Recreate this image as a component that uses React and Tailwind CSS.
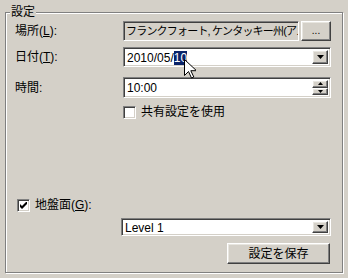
import React from 'react'

const font = { fontFamily: '"Liberation Sans", "Noto Sans CJK JP", sans-serif' }

const sunken =
  'border border-t-[#808080] border-l-[#808080] border-r-white border-b-white shadow-[inset_1px_1px_0_#404040,inset_-1px_-1px_0_#d4d0c8]'
const raised =
  'border border-t-white border-l-white border-r-[#404040] border-b-[#404040] shadow-[inset_-1px_-1px_0_#808080,inset_1px_1px_0_#e8e6e0] bg-[#d4d0c8]'

function DownArrow() {
  return (
    <svg width="7" height="4" viewBox="0 0 7 4">
      <path d="M0 0h7L3.5 4z" fill="#000" />
    </svg>
  )
}

function DropButton() {
  return (
    <div className={`${raised} w-[16px] h-full flex items-center justify-center`}>
      <DownArrow />
    </div>
  )
}

function Label({ text, mnemonic }) {
  return (
    <div className="w-[108px] shrink-0 text-[12px] text-black">
      {text}
      {mnemonic && (
        <>
          (<span className="underline">{mnemonic}</span>)
        </>
      )}
      :
    </div>
  )
}

function Check({ checked }) {
  return (
    <div className={`${sunken} w-[13px] h-[13px] bg-white flex items-center justify-center`}>
      {checked && (
        <svg width="7" height="7" viewBox="0 0 7 7">
          <path d="M0 2v3l2 2L7 2V-1L2 4z" fill="#000" />
        </svg>
      )}
    </div>
  )
}

export default function App() {
  return (
    <div className="w-[348px] h-[278px] bg-[#d4d0c8] pt-[12px] pl-[5px] relative" style={font}>
      <div className="relative w-[338px] h-[261px] border border-[#808080] shadow-[inset_1px_1px_0_#fff,1px_1px_0_#fff] pl-[9px] pr-[11px] pt-[8px]">
        <div className="absolute -top-[9px] left-[4px] px-[1px] bg-[#d4d0c8] text-[12px] leading-[16px] text-black">
          設定
        </div>

        {/* 場所 */}
        <div className="flex items-center h-[20px]">
          <Label text="場所" mnemonic="L" />
          <div className={`${sunken} w-[176px] h-[20px] bg-[#d4d0c8] overflow-hidden whitespace-nowrap text-[11px] leading-[18px] pl-[2px] tracking-[-0.8px]`}>
            フランクフォート, ケンタッキー州(アメリカ
          </div>
          <div className={`${raised} ml-[2px] w-[30px] h-[20px] flex items-center justify-center text-[10px] leading-none`}>
            ...
          </div>
        </div>

        {/* 日付 */}
        <div className="flex items-center h-[20px] mt-[6px]">
          <Label text="日付" mnemonic="T" />
          <div className={`${sunken} w-[208px] h-[20px] bg-white flex items-stretch p-[2px]`}>
            <div className="flex-1 text-[12px] leading-[16px] pl-[1px]">
              2010/05/<span className="bg-[#0a246a] text-white">10</span>
            </div>
            <DropButton />
          </div>
        </div>

        {/* 時間 */}
        <div className="flex items-center h-[21px] mt-[10px]">
          <Label text="時間" />
          <div className={`${sunken} w-[208px] h-[21px] bg-white flex items-stretch p-[2px]`}>
            <div className="flex-1 text-[12px] leading-[17px] pl-[1px]">10:00</div>
            <div className="w-[16px] flex flex-col">
              <div className={`${raised} flex-1 flex items-center justify-center`}>
                <svg width="5" height="3" viewBox="0 0 5 3">
                  <path d="M0 3h5L2.5 0z" fill="#000" />
                </svg>
              </div>
              <div className={`${raised} flex-1 flex items-center justify-center`}>
                <svg width="5" height="3" viewBox="0 0 5 3">
                  <path d="M0 0h5L2.5 3z" fill="#000" />
                </svg>
              </div>
            </div>
          </div>
        </div>

        {/* 共有設定 */}
        <div className="flex items-center mt-[7px] pl-[108px] h-[14px]">
          <Check />
          <span className="ml-[5px] text-[12px] leading-[14px]">共有設定を使用</span>
        </div>

        {/* 地盤面 */}
        <div className="flex items-center mt-[79px] pl-[2px] h-[14px]">
          <Check checked />
          <span className="ml-[5px] text-[12px] leading-[14px]">
            地盤面(<span className="underline">G</span>):
          </span>
        </div>

        <div className="flex mt-[6px] pl-[106px]">
          <div className={`${sunken} w-[210px] h-[18px] bg-white flex items-stretch p-[2px]`}>
            <div className="flex-1 text-[12px] leading-[14px] pl-[1px]">Level 1</div>
            <DropButton />
          </div>
        </div>

        <div className="flex justify-end mt-[7px] pr-[1px]">
          <div className={`${raised} w-[103px] h-[21px] flex items-center justify-center text-[12px]`}>
            設定を保存
          </div>
        </div>
      </div>

      {/* mouse cursor */}
      <svg className="absolute left-[184px] top-[59px]" width="12" height="20" viewBox="0 0 12 20">
        <path d="M0.5 0.5v16l4-4 3 6.5 2.3-1-3-6.3h5.7z" fill="#fff" stroke="#000" strokeWidth="1" />
      </svg>
    </div>
  )
}
